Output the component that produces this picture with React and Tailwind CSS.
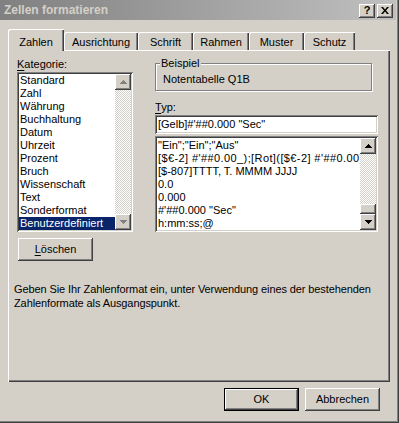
import React from 'react';

// Win2000-style "Zellen formatieren" dialog, Zahlen tab.
const raised =
  'shadow-[inset_-1px_-1px_#404040,inset_1px_1px_#ffffff,inset_-2px_-2px_#808080,inset_2px_2px_#d4d0c8]';
const sunken =
  'shadow-[inset_1px_1px_#808080,inset_-1px_-1px_#ffffff,inset_2px_2px_#404040,inset_-2px_-2px_#d4d0c8]';
const dither =
  'bg-[image:repeating-conic-gradient(#d4d0c8_0_25%,#ffffff_0_50%)] bg-[length:2px_2px]';

const categories = [
  'Standard',
  'Zahl',
  'Währung',
  'Buchhaltung',
  'Datum',
  'Uhrzeit',
  'Prozent',
  'Bruch',
  'Wissenschaft',
  'Text',
  'Sonderformat',
  'Benutzerdefiniert',
];

const formats = [
  '"Ein";"Ein";"Aus"',
  "[$€-2] #'##0.00_);[Rot]([$€-2] #'##0.00)",
  '[$-807]TTTT, T. MMMM JJJJ',
  '0.0',
  '0.000',
  "#'##0.000 \"Sec\"",
  'h:mm:ss;@',
];

const tabs = [
  { label: 'Ausrichtung', w: 'w-[74px]' },
  { label: 'Schrift', w: 'w-[55px]' },
  { label: 'Rahmen', w: 'w-[56px]' },
  { label: 'Muster', w: 'w-[55px]' },
  { label: 'Schutz', w: 'w-[51px]' },
];

function Arrow({ up, disabled }) {
  return (
    <svg width="7" height="4" viewBox="0 0 7 4" className="block">
      <path
        d={up ? 'M3 0h1v1h1v1h1v1h1v1H0V3h1V2h1V1h1z' : 'M0 0h7v1H6v1H5v1H4v1H3V3H2V2H1V1H0z'}
        fill={disabled ? '#808080' : '#000000'}
      />
    </svg>
  );
}

function ScrollButton({ up, disabled }) {
  return (
    <div className={`w-[16px] h-[16px] bg-[#d4d0c8] flex items-center justify-center ${raised}`}>
      <Arrow up={up} disabled={disabled} />
    </div>
  );
}

function Button({ children, def, className = '' }) {
  return (
    <div
      className={`h-[23px] w-[75px] flex items-center justify-center bg-[#d4d0c8] ${
        def
          ? 'shadow-[inset_0_0_0_1px_#000000,inset_-2px_-2px_#404040,inset_2px_2px_#ffffff,inset_-3px_-3px_#808080]'
          : raised
      } ${className}`}
    >
      {children}
    </div>
  );
}

export default function App() {
  return (
    <div
      className="w-[399px] h-[423px] bg-[#d4d0c8] text-[11px] leading-[13px] text-black overflow-hidden shadow-[inset_-1px_-1px_#404040,inset_-2px_-2px_#808080]"
      style={{ fontFamily: '"Liberation Sans", Arial, sans-serif' }}
    >
      {/* title bar */}
      <div className="w-[396px] h-[20px] flex items-center justify-between pl-[4px] pr-[3px] bg-[linear-gradient(to_right,#808080,#c0c0c0)]">
        <span className="text-[12px] font-bold text-[#d4d0c8]">Zellen formatieren</span>
        <div className="flex items-center gap-[2px] mt-[1px]">
          <div className={`w-[16px] h-[14px] bg-[#d4d0c8] flex items-center justify-center ${raised}`}>
            <span className="text-[11px] font-bold leading-none">?</span>
          </div>
          <div className={`w-[16px] h-[14px] bg-[#d4d0c8] flex items-center justify-center ${raised}`}>
            <svg width="8" height="7" viewBox="0 0 8 7">
              <path d="M0 0h2l2 2.5L6 0h2L5 3.5 8 7H6L4 4.5 2 7H0l3-3.5z" fill="#000" />
            </svg>
          </div>
        </div>
      </div>

      {/* tabs */}
      <div className="flex items-end h-[20px] mt-[10px] pl-[8px]">
        <div className="relative z-10 w-[56px] h-[22px] -mb-[1px] bg-[#d4d0c8] flex justify-center pt-[7px] rounded-tl-[2px] shadow-[inset_1px_1px_#ffffff,inset_-1px_0_#404040,inset_-2px_0_#808080]">
          Zahlen
        </div>
        {tabs.map((t) => (
          <div
            key={t.label}
            className={`${t.w} h-[18px] flex justify-center pt-[4px] rounded-tl-[2px] shadow-[inset_1px_1px_#ffffff,inset_-1px_0_#404040,inset_-2px_0_#808080]`}
          >
            {t.label}
          </div>
        ))}
      </div>

      {/* tab panel */}
      <div className="ml-[8px] w-[382px] h-[332px] shadow-[inset_1px_1px_#ffffff,inset_-1px_-1px_#404040,inset_-2px_-2px_#808080] pt-[8px]">
        <div className="flex ml-[9px] gap-[22px]">
          {/* left column */}
          <div className="w-[116px]">
            <div className="h-[14px]">
              <span className="underline underline-offset-[2px]">K</span>ategorie:
            </div>
            <div className={`h-[160px] bg-white p-[2px] flex ${sunken}`}>
              <div className="flex-1 overflow-hidden">
                {categories.map((c) => (
                  <div
                    key={c}
                    className={`h-[13px] pl-[1px] whitespace-nowrap ${
                      c === 'Benutzerdefiniert' ? 'bg-[#0a246a] text-white' : ''
                    }`}
                  >
                    {c}
                  </div>
                ))}
              </div>
              <div className="w-[16px] flex flex-col">
                <ScrollButton up disabled />
                <div className={`flex-1 ${dither}`} />
                <ScrollButton disabled />
              </div>
            </div>
            <Button className="mt-[6px] ml-[1px] w-[74px] h-[21px]">
              <span>
                <span className="underline underline-offset-[2px]">L</span>öschen
              </span>
            </Button>
          </div>

          {/* right column */}
          <div className="w-[223px]">
            <div className="relative mt-[5px] w-[217px] h-[28px] border border-[#808080] shadow-[inset_1px_1px_#ffffff,1px_1px_#ffffff] pl-[7px] pt-[9px]">
              <span className="absolute -top-[7px] left-[4px] px-[1px] bg-[#d4d0c8]">Beispiel</span>
              Notentabelle Q1B
            </div>
            <div className="h-[14px] mt-[10px]">
              <span className="underline underline-offset-[2px]">T</span>yp:
            </div>
            <div className={`h-[19px] bg-white pl-[3px] pt-[3px] whitespace-nowrap ${sunken}`}>
              [Gelb]#'##0.000 "Sec"
            </div>
            <div className={`mt-[2px] h-[96px] bg-white p-[2px] flex ${sunken}`}>
              <div className="flex-1 overflow-hidden pt-[1px]">
                {formats.map((f, i) => (
                  <div
                    key={f}
                    className={`h-[13px] pl-[1px] whitespace-nowrap ${i === 1 ? 'tracking-[0.4px]' : ''}`}
                  >
                    {f}
                  </div>
                ))}
              </div>
              <div className="w-[16px] flex flex-col">
                <ScrollButton up />
                <div className={`flex-1 flex flex-col justify-end ${dither}`}>
                  <div className={`h-[10px] bg-[#d4d0c8] ${raised}`} />
                </div>
                <ScrollButton />
              </div>
            </div>
          </div>
        </div>

        <p className="ml-[6px] mt-[21px] leading-[14px] tracking-[-0.1px]">
          Geben Sie Ihr Zahlenformat ein, unter Verwendung eines der bestehenden
          <br />
          Zahlenformate als Ausgangspunkt.
        </p>
      </div>

      {/* footer buttons */}
      <div className="flex justify-end gap-[6px] mt-[6px] pr-[19px]">
        <Button def>OK</Button>
        <Button>Abbrechen</Button>
      </div>
    </div>
  );
}
